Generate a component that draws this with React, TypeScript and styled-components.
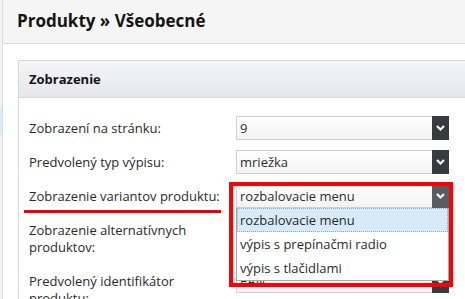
import React from "react";
import styled, { createGlobalStyle } from "styled-components";

const GlobalStyle = createGlobalStyle`
  html, body {
    margin: 0;
    padding: 0;
    background: #ffffff;
    overflow: hidden;
  }
  body {
    font-family: "Open Sans", "DejaVu Sans", sans-serif;
    color: #333333;
  }
`;

const Layout = styled.div`
  display: flex;
  width: 465px;
  height: 299px;
  overflow: hidden;
`;

const Sidebar = styled.aside`
  flex: 0 0 2px;
  background: #f4f4f4;
  border-right: 1px solid #dcdcdc;
`;

const SidebarMark = styled.div`
  margin-top: 107px;
  height: 28px;
  background: #d9ecf8;
`;

const Main = styled.main`
  flex: 1;
  min-width: 0;
`;

const PageHeader = styled.h1`
  margin: 0;
  height: 43px;
  line-height: 42px;
  padding-left: 14px;
  background: #f5f5f5;
  border-bottom: 1px solid #dadada;
  font-size: 17px;
  font-weight: 700;
  color: #141414;
  white-space: nowrap;
`;

const Content = styled.div`
  padding: 16px 0 0 15px;
`;

const Panel = styled.section`
  width: 460px;
  border: 1px solid #d6d6d6;
  background: #fff;
`;

const PanelHeader = styled.h2`
  margin: 0;
  height: 36px;
  line-height: 36px;
  padding-left: 10px;
  background: linear-gradient(#f4f5f6, #e5e7e9);
  border-bottom: 1px solid #d6d6d6;
  font-size: 13px;
  font-weight: 700;
  color: #161616;
`;

const PanelBody = styled.div`
  padding: 18px 0 0 10px;
`;

const Row = styled.div`
  display: grid;
  grid-template-columns: 207px 213px;
  margin-bottom: 10px;
`;

const Label = styled.div`
  position: relative;
  font-size: 13px;
  line-height: 17px;
  padding: 4px 0 3px;
  color: #2a2a2a;
`;

const Underline = styled.div`
  position: absolute;
  left: -5px;
  top: 26px;
  width: 197px;
  height: 3px;
  background: #ee0000;
`;

const SelectCell = styled.div`
  position: relative;
`;

const SelectBox = styled.div`
  display: flex;
  height: 24px;
`;

const SelectValue = styled.div`
  flex: 1;
  border: 1px solid #cfcfcf;
  border-right: none;
  background: linear-gradient(#ffffff, #f3f3f3);
  font-size: 13px;
  line-height: 22px;
  padding-left: 3px;
  color: #2e2e2e;
  white-space: nowrap;
  overflow: hidden;
`;

const SelectButton = styled.div<{ $open?: boolean }>`
  flex: 0 0 17px;
  background: ${(p) => (p.$open ? "#5a5d60" : "#383b3e")};
  display: flex;
  align-items: center;
  justify-content: center;
`;

const DropList = styled.ul`
  position: absolute;
  top: 24px;
  left: 0;
  width: 213px;
  box-sizing: border-box;
  margin: 0;
  padding: 0;
  list-style: none;
  background: #fff;
  border: 1px solid #a9a9a9;
  border-top: none;
  z-index: 2;
`;

const DropItem = styled.li<{ $active?: boolean }>`
  height: 24px;
  line-height: 24px;
  padding-left: 3px;
  font-size: 13px;
  color: #2a2a2a;
  box-sizing: border-box;
  background: ${(p) => (p.$active ? "#d6eaf8" : "transparent")};
  outline: ${(p) => (p.$active ? "1px dotted #8aa6c6" : "none")};
  outline-offset: -1px;
  white-space: nowrap;
`;

const RedFrame = styled.div`
  position: absolute;
  left: -7px;
  right: -4px;
  top: -2px;
  height: 105px;
  box-sizing: border-box;
  border: 4px solid #ff0000;
  z-index: 3;
  pointer-events: none;
`;

const Chevron = () => (
  <svg width="9" height="6" viewBox="0 0 9 6">
    <polyline
      points="1,1 4.5,4.5 8,1"
      fill="none"
      stroke="#ffffff"
      strokeWidth="2.2"
    />
  </svg>
);

type SelectProps = { value: string; open?: boolean; children?: React.ReactNode };

const Select = ({ value, open, children }: SelectProps) => (
  <SelectCell>
    <SelectBox>
      <SelectValue>{value}</SelectValue>
      <SelectButton $open={open}>
        <Chevron />
      </SelectButton>
    </SelectBox>
    {children}
  </SelectCell>
);

export default function App() {
  return (
    <>
      <GlobalStyle />
      <Layout>
        <Sidebar>
          <SidebarMark />
        </Sidebar>
        <Main>
          <PageHeader>Produkty » Všeobecné</PageHeader>
          <Content>
            <Panel>
              <PanelHeader>Zobrazenie</PanelHeader>
              <PanelBody>
                <Row>
                  <Label>Zobrazení na stránku:</Label>
                  <Select value="9" />
                </Row>
                <Row>
                  <Label>Predvolený typ výpisu:</Label>
                  <Select value="mriežka" />
                </Row>
                <Row>
                  <Label>
                    Zobrazenie variantov produktu:
                    <Underline />
                  </Label>
                  <Select value="rozbalovacie menu" open>
                    <DropList>
                      <DropItem $active>rozbalovacie menu</DropItem>
                      <DropItem>výpis s prepínačmi radio</DropItem>
                      <DropItem>výpis s tlačidlami</DropItem>
                    </DropList>
                    <RedFrame />
                  </Select>
                </Row>
                <Row>
                  <Label>
                    Zobrazenie alternatívnych
                    <br />
                    produktov:
                  </Label>
                  <Select value="áno" />
                </Row>
                <Row>
                  <Label>
                    Predvolený identifikátor
                    <br />
                    produktu:
                  </Label>
                  <Select value="EAN" />
                </Row>
              </PanelBody>
            </Panel>
          </Content>
        </Main>
      </Layout>
    </>
  );
}
